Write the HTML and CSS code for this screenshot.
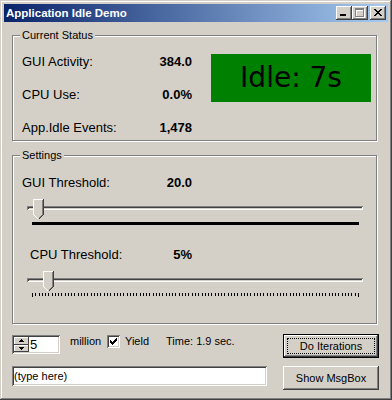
FILE: index.html
```html
<!DOCTYPE html>
<html lang="en">
<head>
  <meta charset="UTF-8" />
  <title>Application Idle Demo</title>
  <link rel="stylesheet" href="styles.css">
</head>
<body>
  <div class="window">
    <div class="titlebar">
      <span class="title">Application Idle Demo</span>
      <div class="caption-buttons">
        <span class="cap-btn">
          <svg width="16" height="14" shape-rendering="crispEdges"><rect x="4" y="8" width="6" height="2" fill="#000"/></svg>
        </span>
        <span class="cap-btn">
          <svg width="16" height="14" shape-rendering="crispEdges">
            <path d="M4 3h9v9H4z M5 5v6h7V5z" fill="#fff" fill-rule="evenodd"/>
            <path d="M3 2h9v9H3z M4 4v6h7V4z" fill="#808080" fill-rule="evenodd"/>
          </svg>
        </span>
        <span class="cap-btn close">
          <svg width="16" height="14" shape-rendering="crispEdges" fill="#000">
            <path d="M4 3h2v1h1v1h2V4h1V3h2v1h-1v1h-1v1h-1v1h1v1h1v1h1v1h-2V9H9V8H7v1H6v1H4V9h1V8h1V7h1V6H6V5H5V4H4z"/>
          </svg>
        </span>
      </div>
    </div>

    <fieldset class="group status">
      <legend>Current Status</legend>
      <div class="status-body">
        <div class="readings">
          <div class="reading"><span>GUI Activity:</span><b>384.0</b></div>
          <div class="reading"><span>CPU Use:</span><b>0.0%</b></div>
          <div class="reading"><span>App.Idle Events:</span><b>1,478</b></div>
        </div>
        <div class="idle">Idle: 7s</div>
      </div>
    </fieldset>

    <fieldset class="group settings">
      <legend>Settings</legend>
      <div class="setting"><span>GUI Threshold:</span><b>20.0</b></div>
      <div class="slider">
        <div class="track"></div>
        <div class="ticks-dense"></div>
        <svg class="thumb" style="left: 6px" width="11" height="21" shape-rendering="crispEdges">
          <polygon points="0,0 11,0 11,16 6,21 5,21 0,16" fill="#d4d0c8"/>
          <path d="M0.5 15.5V0.5H10M0.5 15.5L5.5 20.5" stroke="#fff" fill="none"/>
          <path d="M9.5 1V15.5L5.5 19.5" stroke="#808080" fill="none"/>
          <path d="M10.5 0V15.5L5.5 20.5" stroke="#404040" fill="none"/>
        </svg>
      </div>

      <div class="setting cpu"><span>CPU Threshold:</span><b>5%</b></div>
      <div class="slider">
        <div class="track"></div>
        <svg class="ticks" width="327" height="4" shape-rendering="crispEdges">
          <path stroke="#000" d="M0.5 0v4M3.5 0v3M7.5 0v3M10.5 0v3M13.5 0v3M16.5 0v3M20.5 0v3M23.5 0v3M26.5 0v3M29.5 0v3M33.5 0v3M36.5 0v3M39.5 0v3M42.5 0v3M46.5 0v3M49.5 0v3M52.5 0v3M55.5 0v3M59.5 0v3M62.5 0v3M65.5 0v3M68.5 0v3M72.5 0v3M75.5 0v3M78.5 0v3M82.5 0v3M85.5 0v3M88.5 0v3M91.5 0v3M95.5 0v3M98.5 0v3M101.5 0v3M104.5 0v3M108.5 0v3M111.5 0v3M114.5 0v3M117.5 0v3M121.5 0v3M124.5 0v3M127.5 0v3M130.5 0v3M134.5 0v3M137.5 0v3M140.5 0v3M143.5 0v3M147.5 0v3M150.5 0v3M153.5 0v3M156.5 0v3M160.5 0v3M163.5 0v3M166.5 0v3M170.5 0v3M173.5 0v3M176.5 0v3M179.5 0v3M183.5 0v3M186.5 0v3M189.5 0v3M192.5 0v3M196.5 0v3M199.5 0v3M202.5 0v3M205.5 0v3M209.5 0v3M212.5 0v3M215.5 0v3M218.5 0v3M222.5 0v3M225.5 0v3M228.5 0v3M231.5 0v3M235.5 0v3M238.5 0v3M241.5 0v3M245.5 0v3M248.5 0v3M251.5 0v3M254.5 0v3M258.5 0v3M261.5 0v3M264.5 0v3M267.5 0v3M271.5 0v3M274.5 0v3M277.5 0v3M280.5 0v3M284.5 0v3M287.5 0v3M290.5 0v3M293.5 0v3M297.5 0v3M300.5 0v3M303.5 0v3M306.5 0v3M310.5 0v3M313.5 0v3M316.5 0v3M319.5 0v3M323.5 0v3M326.5 0v4"/>
        </svg>
        <svg class="thumb" style="left: 16px" width="11" height="21" shape-rendering="crispEdges">
          <polygon points="0,0 11,0 11,16 6,21 5,21 0,16" fill="#d4d0c8"/>
          <path d="M0.5 15.5V0.5H10M0.5 15.5L5.5 20.5" stroke="#fff" fill="none"/>
          <path d="M9.5 1V15.5L5.5 19.5" stroke="#808080" fill="none"/>
          <path d="M10.5 0V15.5L5.5 20.5" stroke="#404040" fill="none"/>
        </svg>
      </div>
    </fieldset>

    <div class="controls">
      <div class="row">
        <div class="spinner">
          <div class="spin-buttons">
            <span><svg width="5" height="3" shape-rendering="crispEdges"><path d="M2 0h1v1h1v1h1v1H0V2h1V1h1z"/></svg></span>
            <span><svg width="5" height="3" shape-rendering="crispEdges"><path d="M0 0h5v1H4v1H3v1H2V2H1V1H0z"/></svg></span>
          </div>
          <span class="spin-value">5</span>
        </div>
        <span class="unit">million</span>
        <label class="check">
          <span class="box">
            <svg width="7" height="7" shape-rendering="crispEdges"><path d="M6 0h1v3H6v1H5v1H4v1H3v1H2V6H1V5H0V2h1v1h1v1h1V3h1V2h1V1h1z"/></svg>
          </span>
          Yield
        </label>
        <span class="time">Time: 1.9 sec.</span>
        <button class="btn default">Do Iterations</button>
      </div>
      <div class="row">
        <input class="field" type="text" value="(type here)">
        <button class="btn">Show MsgBox</button>
      </div>
    </div>
  </div>
</body>
</html>
```

FILE: styles.css
```css
* {
  box-sizing: border-box;
  margin: 0;
  padding: 0;
}

body {
  background-color: #d4d0c8;
  color: #000;
  font-family: 'Liberation Sans', Arial, sans-serif;
  font-size: 13px;
}

.window {
  width: 392px;
  height: 400px;
  padding: 4px;
  background-color: #d4d0c8;
  box-shadow: inset -1px -1px #404040, inset 1px 1px #d4d0c8,
              inset -2px -2px #808080, inset 2px 2px #fff;
}

.titlebar {
  height: 18px;
  display: flex;
  align-items: center;
  justify-content: space-between;
  padding: 0 2px;
  background: linear-gradient(to right, #0a246a, #a6caf0);
}

.title {
  color: #fff;
  font-size: 11.5px;
  font-weight: bold;
}

.caption-buttons {
  display: flex;
}

.cap-btn {
  display: block;
  width: 16px;
  height: 14px;
  background-color: #d4d0c8;
  box-shadow: inset -1px -1px #404040, inset 1px 1px #fff,
              inset -2px -2px #808080;
}

.cap-btn svg {
  display: block;
}

.cap-btn.close {
  margin-left: 2px;
}

/* group boxes */
.group {
  border: 1px solid #808080;
  box-shadow: 1px 1px #fff, inset 1px 1px #fff;
  margin: 7px 11px 0 8px;
}

.group legend {
  font-size: 11px;
  line-height: 13px;
  padding: 0 2px;
  margin-left: -2px;
  background-color: #d4d0c8;
}

.status {
  padding: 11px 5px 4px 9px;
}

.status-body {
  display: flex;
}

.readings {
  width: 170px;
  display: flex;
  flex-direction: column;
  gap: 16px;
}

.reading,
.setting {
  display: flex;
  justify-content: space-between;
  line-height: 17px;
}

.idle {
  width: 160px;
  height: 48px;
  margin: 1px 0 0 19px;
  background-color: #008000;
  font-family: 'DejaVu Sans', sans-serif;
  font-size: 28px;
  line-height: 48px;
  text-align: center;
}

.settings {
  margin-top: 8px;
  padding: 12px 5px 25px 9px;
}

.setting {
  width: 170px;
}

.setting.cpu {
  width: 162px;
  margin: 20px 0 0 8px;
}

/* trackbars */
.slider {
  position: relative;
  width: 336px;
  height: 27px;
  margin: 8px 0 0 5px;
  padding-top: 7px;
}

.track {
  height: 4px;
  box-shadow: inset 1px 1px #808080, inset -1px -1px #fff,
              inset 2px 2px #404040, inset -2px -2px #d4d0c8;
}

.ticks-dense {
  width: 327px;
  height: 3px;
  margin: 12px 0 0 5px;
  background-color: #000;
}

.ticks {
  display: block;
  margin: 11px 0 0 5px;
}

.thumb {
  position: absolute;
  top: 0;
}

/* bottom controls */
.controls {
  margin-top: 10px;
  padding: 0 9px 0 8px;
  font-size: 11px;
}

.row {
  display: flex;
  align-items: flex-start;
}

.row + .row {
  margin-top: 8px;
}

.spinner {
  display: flex;
  width: 48px;
  height: 19px;
  margin-top: 1px;
  padding: 2px;
  background-color: #fff;
  box-shadow: inset 1px 1px #808080, inset -1px -1px #fff,
              inset 2px 2px #404040, inset -2px -2px #d4d0c8;
}

.spin-buttons {
  display: flex;
  flex-direction: column;
  width: 15px;
}

.spin-buttons span {
  flex: 1;
  display: flex;
  align-items: center;
  justify-content: center;
  background-color: #d4d0c8;
  box-shadow: inset -1px -1px #404040, inset 1px 1px #fff;
}

.spin-buttons svg {
  display: block;
}

.spin-value {
  padding-left: 1px;
  font-size: 13px;
  line-height: 15px;
}

.unit,
.check,
.time {
  line-height: 13px;
  margin-top: 1px;
}

.unit {
  width: 37px;
  margin-left: 10px;
}

.check {
  display: flex;
  align-items: center;
  width: 59px;
}

.box {
  display: flex;
  align-items: center;
  justify-content: center;
  width: 13px;
  height: 13px;
  margin-right: 5px;
  background-color: #fff;
  box-shadow: inset 1px 1px #808080, inset -1px -1px #fff,
              inset 2px 2px #404040, inset -2px -2px #d4d0c8;
}

.box svg {
  display: block;
}

.btn {
  width: 96px;
  height: 24px;
  margin-left: auto;
  border: none;
  background-color: #d4d0c8;
  color: #000;
  font-family: 'Liberation Sans', Arial, sans-serif;
  font-size: 11px;
  box-shadow: inset -1px -1px #404040, inset 1px 1px #fff,
              inset -2px -2px #808080;
}

.btn.default {
  border: 1px solid #000;
  outline: 1px dotted #000;
  outline-offset: -5px;
}

.field {
  width: 255px;
  height: 20px;
  padding: 0 2px;
  border: none;
  background-color: #fff;
  color: #000;
  font-family: 'Liberation Sans', Arial, sans-serif;
  font-size: 11px;
  box-shadow: inset 1px 1px #808080, inset -1px -1px #fff,
              inset 2px 2px #404040, inset -2px -2px #d4d0c8;
}
```
